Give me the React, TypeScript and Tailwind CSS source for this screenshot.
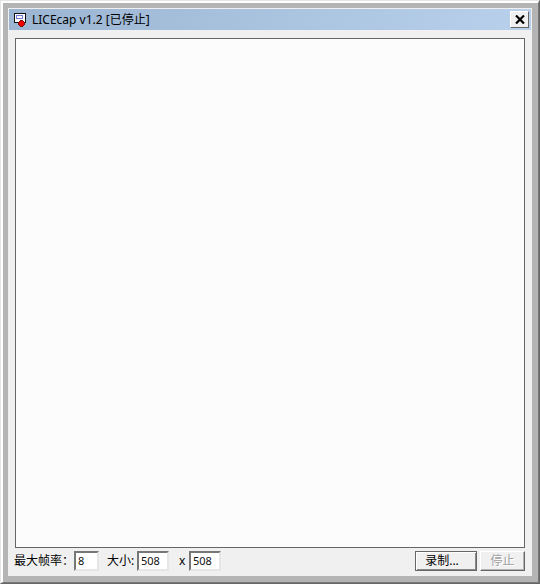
import { useState } from 'react';
import type { InputHTMLAttributes } from 'react';
import clsx from 'clsx';

function AppIcon() {
  return (
    <svg width="12" height="14" viewBox="0 0 12 14" shapeRendering="crispEdges" aria-hidden="true">
      <rect x="0" y="0" width="12" height="10" fill="#111" />
      <rect x="1" y="1" width="10" height="8" fill="#fff" />
      <rect x="2" y="2" width="7" height="4" fill="#7878dc" />
      <rect x="3" y="3" width="5" height="2" fill="#fff" />
      <path d="M6 7h3v1h1v1h1v3h-1v1h-1v1h-3v-1h-1v-1h-1v-3h1v-1h1z" fill="#7a0a0a" />
      <path d="M6 8h3v1h1v3h-1v1h-3v-1h-1v-3h1z" fill="#f00000" />
    </svg>
  );
}

function CloseIcon() {
  return (
    <svg width="10" height="9" viewBox="0 0 10 9" aria-hidden="true">
      <path d="M1 0.5L9 8.5M9 0.5L1 8.5" stroke="#000" strokeWidth="2.2" />
    </svg>
  );
}

function NumberBox({ className, ...props }: InputHTMLAttributes<HTMLInputElement>) {
  return (
    <input
      type="text"
      className={clsx(
        'h-5 border-2 border-t-[#777] border-l-[#777] border-r-[#e6e6e6] border-b-[#e6e6e6] bg-white pl-0.5 pb-0.5 text-[11px] text-[#111] outline-none',
        className,
      )}
      {...props}
    />
  );
}

export default function App() {
  const [fps, setFps] = useState('8');
  const [width, setWidth] = useState('508');
  const [height, setHeight] = useState('508');

  return (
    <div className="flex min-h-screen flex-col border border-t-[#e6e6e6] border-l-[#e6e6e6] border-r-[#666] border-b-[#666] font-['Noto_Sans','Noto_Sans_CJK_SC',sans-serif] text-xs text-black">
      <div className="flex flex-1 flex-col border-t-2 border-l-2 border-r border-b border-t-white border-l-white border-r-[#777] border-b-[#777]">
        <div className="flex flex-1 flex-col border-5 border-r-6 border-b-6 border-[#b4b4b4] bg-[#f0f0f0]">
          <header className="mx-px mt-px flex h-[21px] items-center bg-linear-to-r from-[#9bb5d2] to-[#b8d0ec] pr-0.5 pl-[5px]">
            <AppIcon />
            <h1 className="ml-1.5 flex-1 leading-5">LICEcap v1.2 [已停止]</h1>
            <button
              type="button"
              aria-label="关闭"
              className="flex h-[17px] w-[19px] items-center justify-center border border-t-white border-l-white border-r-[#666] border-b-[#666] bg-[#f0f0f0]"
            >
              <CloseIcon />
            </button>
          </header>

          <main className="mx-[7px] mt-2 flex-1 border border-[#666] bg-[#fcfcfc]" />

          <footer className="mx-[6px] flex h-7 items-center pb-0.5">
            <label htmlFor="fps" className="w-[60px]">最大帧率：</label>
            <NumberBox id="fps" className="w-[25px]" value={fps} onChange={(e) => setFps(e.target.value)} />
            <label htmlFor="width" className="ml-2 w-[30px]">大小:</label>
            <NumberBox id="width" className="w-8" value={width} onChange={(e) => setWidth(e.target.value)} />
            <label htmlFor="height" className="w-5 pl-2.5">x</label>
            <NumberBox id="height" className="w-8" value={height} onChange={(e) => setHeight(e.target.value)} />
            <div className="mr-px ml-auto flex gap-[3px]">
              <button
                type="button"
                className="h-5 w-[62px] border border-[#666] bg-[#f0f0f0] pr-2 leading-4 shadow-[inset_1px_1px_#fff,inset_-1px_-1px_#888]"
              >
                录制...
              </button>
              <button
                type="button"
                disabled
                className="h-5 w-[45px] border border-t-white border-l-white border-r-[#666] border-b-[#666] bg-[#f0f0f0] leading-4 text-[#a0a0a0] shadow-[inset_-1px_-1px_#b4b4b4] [text-shadow:1px_1px_#fff]"
              >
                停止
              </button>
            </div>
          </footer>
        </div>
      </div>
    </div>
  );
}
